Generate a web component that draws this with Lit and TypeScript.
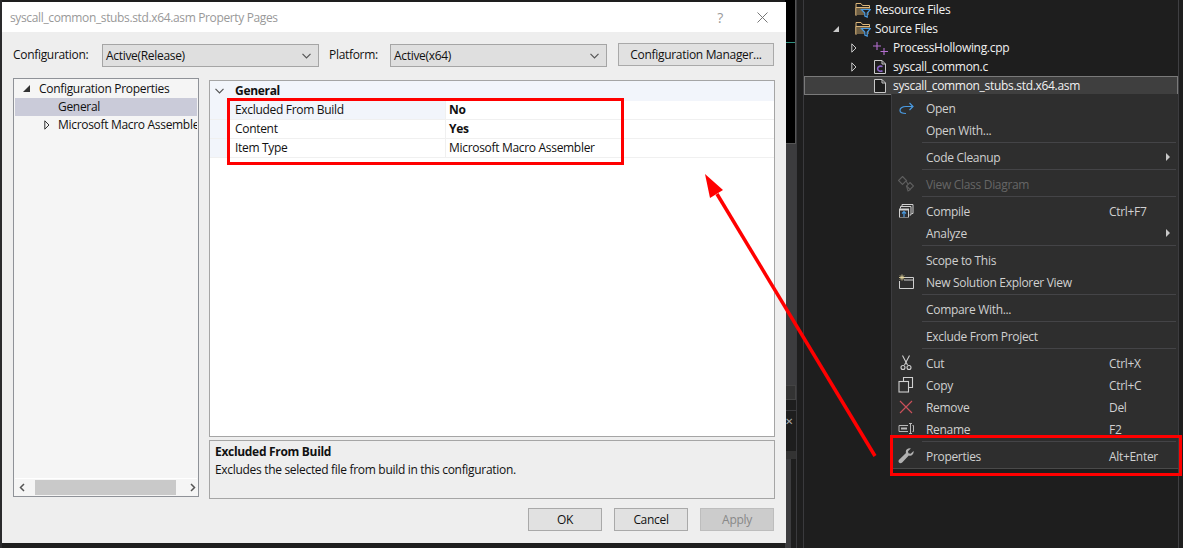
import { LitElement, html, svg, css, nothing } from "lit";
import { customElement } from "lit/decorators.js";

const icons: Record<string, unknown> = {
  open: html`<svg class="ic" viewBox="0 0 16 16" fill="none" stroke="#4a9ae0" stroke-width="1.2"><path d="M8 13.5C4 13.5 2 12.5 2 10.5C2 7.5 5 6.5 8 6.5L15 6.5"/><path d="M11.5 3L15 6.5L11.5 10"/></svg>`,
  diagram: html`<svg class="ic" viewBox="0 0 16 16" fill="none" stroke="#5f5f5f" stroke-width="1.1"><path d="M4.5 .5L8.5 4.5L4.5 8.5L.5 4.5Z"/><path d="M12 6.5L15.5 10L12 13.5L8.5 10Z"/><path d="M8 5L10 8M8.5 10L10 15L12.5 13.5"/></svg>`,
  compile: html`<svg class="ic" viewBox="0 0 16 16" fill="none"><path d="M4 3.5V1.5H15V10.5H13.5M2.5 5.5V3.5H13V12H11.5" stroke="#d0d0d0"/><rect x="1" y="5.5" width="10" height="9" fill="#d0d0d0"/><rect x="2" y="7.5" width="8" height="6.5" fill="#2d2d30"/><path d="M6 14V9M4 10.5L6 8.5L8 10.5" stroke="#4a9ae0" stroke-width="1.2"/></svg>`,
  newview: html`<svg class="ic" viewBox="0 0 16 16" fill="none"><path d="M5 3.5H15.5V14.5H1.5V7" stroke="#cfcfcf"/><path d="M6 6H15" stroke="#cfcfcf"/><path d="M4 0.5V6.5M1 3.5H7M2 1.5L6 5.5M6 1.5L2 5.5" stroke="#e8d9a0" stroke-width="0.9"/></svg>`,
  cut: html`<svg class="ic" viewBox="0 0 16 16" fill="none" stroke="#cfcfcf" stroke-width="1.1"><path d="M4.5 0.5L9.5 10M11.5 0.5L6.5 10"/><circle cx="5" cy="12.5" r="2"/><circle cx="11" cy="12.5" r="2"/></svg>`,
  copy: html`<svg class="ic" viewBox="0 0 16 16" fill="none" stroke="#d0d0d0" stroke-width="1.1"><path d="M5.5 4.5V0.5H14.5V10.5H10.5"/><rect x="1" y="4.5" width="9.5" height="10.5"/></svg>`,
  remove: html`<svg class="ic" viewBox="0 0 16 16" fill="none" stroke="#c9505a" stroke-width="1.2"><path d="M2 2L14 14M14 2L2 14"/></svg>`,
  rename: html`<svg class="ic" viewBox="0 0 16 16" fill="none" stroke="#b8b8b8"><path d="M10 4.5H1V10.5H10"/><rect x="3" y="6.5" width="6" height="2" fill="#b8b8b8" stroke="none"/><path d="M11 2.5H14M11 12.5H14M12.5 2.5V12.5"/><path d="M14.5 4.5H15.5V10.5H14.5"/></svg>`,
  wrench: html`<svg class="ic" viewBox="0 0 16 16" fill="#b0b0b0"><path d="M15.6 3C16.2 6 13.6 8.6 10.8 7.6L4.2 14.4C3.2 15.5 1.7 15.4 1 14.6C.3 13.9.3 12.6 1.3 11.6L8 5C7 2.2 9.6 -.2 12.8 .4L10 3.2L10.4 5.2L12.6 5.8Z"/></svg>`,
};

type Item = { label?: string; key?: string; icon?: string; sub?: boolean; off?: boolean; sep?: boolean };
const menu: Item[] = [
  { label: "Open", icon: "open" },
  { label: "Open With..." },
  { sep: true },
  { label: "Code Cleanup", sub: true },
  { sep: true },
  { label: "View Class Diagram", icon: "diagram", off: true },
  { sep: true },
  { label: "Compile", icon: "compile", key: "Ctrl+F7" },
  { label: "Analyze", sub: true },
  { sep: true },
  { label: "Scope to This" },
  { label: "New Solution Explorer View", icon: "newview" },
  { sep: true },
  { label: "Compare With..." },
  { sep: true },
  { label: "Exclude From Project" },
  { sep: true },
  { label: "Cut", icon: "cut", key: "Ctrl+X" },
  { label: "Copy", icon: "copy", key: "Ctrl+C" },
  { label: "Remove", icon: "remove", key: "Del" },
  { label: "Rename", icon: "rename", key: "F2" },
  { sep: true },
  { label: "Properties", icon: "wrench", key: "Alt+Enter" },
];

const chev = html`<svg class="chev" viewBox="0 0 9 6" fill="none" stroke="#555" stroke-width="1.2"><path d="M.5 .8L4.5 4.8L8.5 .8"/></svg>`;
const hollow = (stroke: string) => html`<svg class="tri" viewBox="0 0 6 10" fill="none" stroke="${stroke}"><path d="M.8 .8L5 5L.8 9.2Z"/></svg>`;
const filter = html`<svg class="ic" viewBox="0 0 16 16" fill="none"><path d="M1 13.5V1.5H6L7.5 3.5H14.5V6.5" stroke="#dcb67a" stroke-width="1"/><path d="M1 13.5V5.5H14.5" stroke="#dcb67a"/><path d="M1.5 6H14V13H1.5Z" fill="#6e5f45"/><path d="M6.5 7.5H15.5L12.2 11V15L9.8 14V11Z" fill="#1e1e1e" stroke="#4a9ae0" stroke-width="1.2"/></svg>`;
const cpp = html`<svg class="ic" viewBox="0 0 16 16" fill="none" stroke="#b46fd0" stroke-width="1.1"><path d="M4 2V10M0 6H8M11 8V15M7.5 11.5H15"/></svg>`;
const doc = (inner: unknown) => html`<svg class="ic" viewBox="0 0 16 16" fill="none"><path d="M1.5 1.5H9L12.5 5V14.5H1.5Z" fill="#1e1e1e" stroke="#c8c8c8"/><path d="M9 1.5V5H12.5" stroke="#c8c8c8"/>${inner}</svg>`;
const cLetter = svg`<path d="M9.5 7.6C7.5 6.6 4.6 7.3 4.6 9.7C4.6 12 7.5 12.8 9.5 11.7" stroke="#8a63c8" stroke-width="1.6"/>`;

@customElement("app-root")
export class AppRoot extends LitElement {
  static styles = css`
    :host { display: block; width: 1183px; height: 548px; overflow: hidden; position: relative; background: #1e1e1e;
      font-family: "Open Sans", sans-serif; font-size: 12px; letter-spacing: -0.31px; }
    .desk { display: flex; height: 548px; }
    .behind { width: 803px; border-right: 1px solid #3a3a3d; flex: none; display: flex; justify-content: flex-end; box-sizing: content-box; position: relative; }
    .edge { position: absolute; left: 0; top: 0; bottom: 0; width: 2px; background: #2a2a2c; }
    .strip { width: 11px; margin-right: 6px; border-right: 1px solid #3a3a3d; display: flex; flex-direction: column; }
    .editor { height: 143px; background: #000; border-right: 1px solid #555; border-bottom: 1px solid #555; display: flex; align-items: flex-start; flex: none; }
    .teal { width: 100%; height: 1px; margin-top: 42px; background: #2f8f80; }
    .scroll { height: 241px; background: #3c3c3e; flex: none; }
    .thumb { height: 13px; background: #333; border: 1px solid #444; border-left: 0; flex: none; }
    .gap { height: 10px; flex: none; }
    .pane { flex: 1; background: #1e1e1e; border-top: 1px solid #3a3a3d; display: flex; flex-direction: column; color: #aaa; }
    .x { height: 38px; padding-top: 2px; font-size: 10px; line-height: 16px; }
    .band { height: 8px; background: #333; }
    .lower { flex: 1; background: #3c3c3e; width: 6px; }

    .explorer { flex: 1; position: relative; }
    .explorer-in { width: 374px; height: 548px; border-right: 1px solid #3f3f42; color: #f1f1f1; }
    .row { height: 19px; display: flex; align-items: center; white-space: nowrap; box-sizing: border-box; }
    .lvl1 { padding-left: 29px; }
    .lvl2 { padding-left: 47px; }
    .slot { width: 22px; flex: none; display: flex; align-items: center; }
    .row .ic { margin-right: 4px; }
    .row.sel { background: #3f3f3f; outline: 1px solid #7a7a7a; outline-offset: -1px; }
    .ic { width: 16px; height: 16px; flex: none; display: block; }
    .tri { width: 6px; height: 10px; display: block; flex: none; }
    .filled { width: 0; height: 0; border-left: 6px solid transparent; border-bottom: 6px solid #c8c8c8; }

    .menu { position: absolute; left: 891px; top: 94px; width: 288px; height: 375px; box-sizing: border-box;
      background: #2e2e2e; border: 1px solid #3c3c3f; border-top: 0; border-bottom-color: #4a4a4a; padding-top: 3px; color: #d0d0d0; }
    .it { height: 22px; display: flex; align-items: center; position: relative; white-space: nowrap; }
    .it .icslot { width: 34px; padding-left: 6px; box-sizing: border-box; flex: none; }
    .it .lb { width: 183px; flex: none; }
    .it.off { color: #666; }
    .sp { height: 1px; margin: 1px 2px 3px 30px; background: #444447; }
    .arr { position: absolute; right: 8px; top: 7px; border-left: 4px solid #c8c8c8; border-top: 4px solid transparent; border-bottom: 4px solid transparent; }

    .dialog { position: absolute; left: 2px; top: 2px; width: 784px; height: 541px; background: #eeeeee; color: #111; display: flex; flex-direction: column; box-sizing: border-box; }
    .titlebar { height: 30px; background: #fff; flex: none; display: flex; align-items: center; padding: 0 18px 0 8px; color: #999; white-space: nowrap; }
    .titlebar .t { flex: 1; letter-spacing: -0.36px; }
    .q { font-size: 14px; color: #999; margin-right: 34px; }
    .close { width: 11px; height: 11px; display: block; }
    .config { display: flex; align-items: flex-start; margin: 11px 0 0 11px; height: 23px; flex: none; }
    .lab { line-height: 23px; white-space: nowrap; }
    .l1 { width: 89px; }
    .l2 { width: 61px; margin-left: 10px; }
    .sel-box { width: 217px; height: 23px; margin-top: 1px; background: #dfdfdf; border: 1px solid #a5a5a5; box-sizing: border-box; display: flex; align-items: center; justify-content: space-between; padding: 0 7px 0 3px; }
    .chev { width: 9px; height: 6px; display: block; }
    .btn { background: #e1e1e1; border: 1px solid #a9a9a9; box-sizing: border-box; display: flex; align-items: center; justify-content: center; height: 23px; white-space: nowrap; }
    .cfgbtn { width: 156px; margin-left: 11px; }
    .main { display: flex; gap: 10px; margin: 12px 0 0 11px; height: 421px; flex: none; }
    .tree { width: 186px; height: 419px; box-sizing: border-box; background: #f5f5f5; border: 1px solid #8f9298; display: flex; flex-direction: column; overflow: hidden; padding: 1px; }
    .tr { height: 18px; flex: none; box-sizing: border-box; padding-bottom: 1px; display: flex; align-items: center; white-space: nowrap; overflow: hidden; }
    .tr.active { background: #cacbd9; }
    .tr1 { padding-left: 8px; }
    .tr2 { padding-left: 43px; }
    .tr3 { padding-left: 29px; }
    .tr3 .tri { margin-right: 8px; }
    .dn { width: 0; height: 0; border-left: 7px solid transparent; border-bottom: 7px solid #333; margin-right: 9px; }
    .grow { flex: 1; }
    .hbar { height: 16px; flex: none; border-top: 1px solid #fff; display: flex; align-items: center; }
    .hbar .thumbh { width: 141px; height: 15px; background: #c9c9c9; margin: 0 10px 0 10px; }
    .hbar svg { width: 6px; height: 9px; display: block; margin-left: 4px; }
    .right { width: 566px; padding-top: 2px; display: flex; flex-direction: column; gap: 3px; }
    .grid { height: 357px; box-sizing: border-box; background: #fff; border: 1px solid #a5a5a5; flex: none; }
    .gh { height: 20px; box-sizing: border-box; padding: 0 0 1px 5px; background: #f2f5fb; display: flex; align-items: center; font-weight: 700; }
    .gh .chev { margin-right: 11px; width: 9px; }
    .pr { height: 19px; box-sizing: border-box; display: flex; border-bottom: 1px solid #f0f0f0; line-height: 17px; }
    .gut { width: 20px; background: #f2f5fb; flex: none; }
    .name { width: 216px; flex: none; padding-left: 5px; box-sizing: border-box; border-right: 1px solid #f0f0f0; }
    .pr.first .name { background: #f2f5fb; }
    .val { padding-left: 3px; }
    .val.b { font-weight: 700; }
    .desc { height: 59px; box-sizing: border-box; border: 1px solid #a5a5a5; background: #eee; padding: 2px 5px; flex: none; line-height: 18px; }
    .desc b { display: block; }
    .foot { display: flex; justify-content: flex-end; gap: 12px; margin: 9px 12px 0 0; }
    .foot .btn { width: 74px; }
    .foot .dis { background: #ccc; color: #888; border-color: #bdbdbd; }

    .marks { position: absolute; left: 0; top: 0; width: 1183px; height: 548px; pointer-events: none; }
  `;

  render() {
    return html`
      <div class="desk">
        <div class="behind">
          <div class="edge"></div>
          <div class="strip">
            <div class="editor"><div class="teal"></div></div>
            <div class="scroll"></div>
            <div class="thumb"></div>
            <div class="gap"></div>
            <div class="pane"><div class="x">✕</div><div class="band"></div><div class="lower"></div></div>
          </div>
        </div>
        <div class="explorer">
          <div class="explorer-in">
            <div class="row lvl1"><span class="slot"></span>${filter}Resource Files</div>
            <div class="row lvl1"><span class="slot"><span class="filled"></span></span>${filter}Source Files</div>
            <div class="row lvl2"><span class="slot">${hollow("#c8c8c8")}</span>${cpp}ProcessHollowing.cpp</div>
            <div class="row lvl2"><span class="slot">${hollow("#c8c8c8")}</span>${doc(cLetter)}syscall_common.c</div>
            <div class="row lvl2 sel"><span class="slot"></span>${doc(nothing)}syscall_common_stubs.std.x64.asm</div>
          </div>
        </div>
      </div>

      <div class="menu">
        ${menu.map((m) =>
          m.sep
            ? html`<div class="sp"></div>`
            : html`<div class="it ${m.off ? "off" : ""}">
                <span class="icslot">${m.icon ? icons[m.icon] : nothing}</span>
                <span class="lb">${m.label}</span>
                <span>${m.key ?? ""}</span>
                ${m.sub ? html`<span class="arr"></span>` : nothing}
              </div>`
        )}
      </div>

      <div class="dialog">
        <div class="titlebar">
          <span class="t">syscall_common_stubs.std.x64.asm Property Pages</span>
          <span class="q">?</span>
          <svg class="close" viewBox="0 0 11 11" stroke="#777" fill="none"><path d="M.5 .5L10.5 10.5M10.5 .5L.5 10.5"/></svg>
        </div>
        <div class="config">
          <span class="lab l1">Configuration:</span>
          <div class="sel-box"><span>Active(Release)</span>${chev}</div>
          <span class="lab l2">Platform:</span>
          <div class="sel-box"><span>Active(x64)</span>${chev}</div>
          <div class="btn cfgbtn">Configuration Manager...</div>
        </div>
        <div class="main">
          <div class="tree">
            <div class="tr tr1"><span class="dn"></span>Configuration Properties</div>
            <div class="tr tr2 active">General</div>
            <div class="tr tr3">${hollow("#333")}Microsoft Macro Assembler</div>
            <div class="grow"></div>
            <div class="hbar">
              <svg viewBox="0 0 6 9" fill="none" stroke="#555" stroke-width="1.5"><path d="M5 1L1.5 4.5L5 8"/></svg>
              <div class="thumbh"></div>
              <svg viewBox="0 0 6 9" fill="none" stroke="#555" stroke-width="1.5"><path d="M1 1L4.5 4.5L1 8"/></svg>
            </div>
          </div>
          <div class="right">
            <div class="grid">
              <div class="gh">${chev}General</div>
              <div class="pr first"><span class="gut"></span><span class="name">Excluded From Build</span><span class="val b">No</span></div>
              <div class="pr"><span class="gut"></span><span class="name">Content</span><span class="val b">Yes</span></div>
              <div class="pr"><span class="gut"></span><span class="name">Item Type</span><span class="val">Microsoft Macro Assembler</span></div>
            </div>
            <div class="desc"><b>Excluded From Build</b>Excludes the selected file from build in this configuration.</div>
          </div>
        </div>
        <div class="foot">
          <div class="btn">OK</div>
          <div class="btn">Cancel</div>
          <div class="btn dis">Apply</div>
        </div>
      </div>

      <svg class="marks" viewBox="0 0 1183 548" fill="none">
        <rect x="228.5" y="99.5" width="394" height="64" stroke="#f00" stroke-width="3"/>
        <rect x="891.5" y="436.5" width="289" height="38" stroke="#f00" stroke-width="3"/>
        <path d="M875 456L717 194" stroke="#f00" stroke-width="3.5"/>
        <path d="M705 174L710 198L723 190Z" fill="#f00"/>
      </svg>
    `;
  }
}
